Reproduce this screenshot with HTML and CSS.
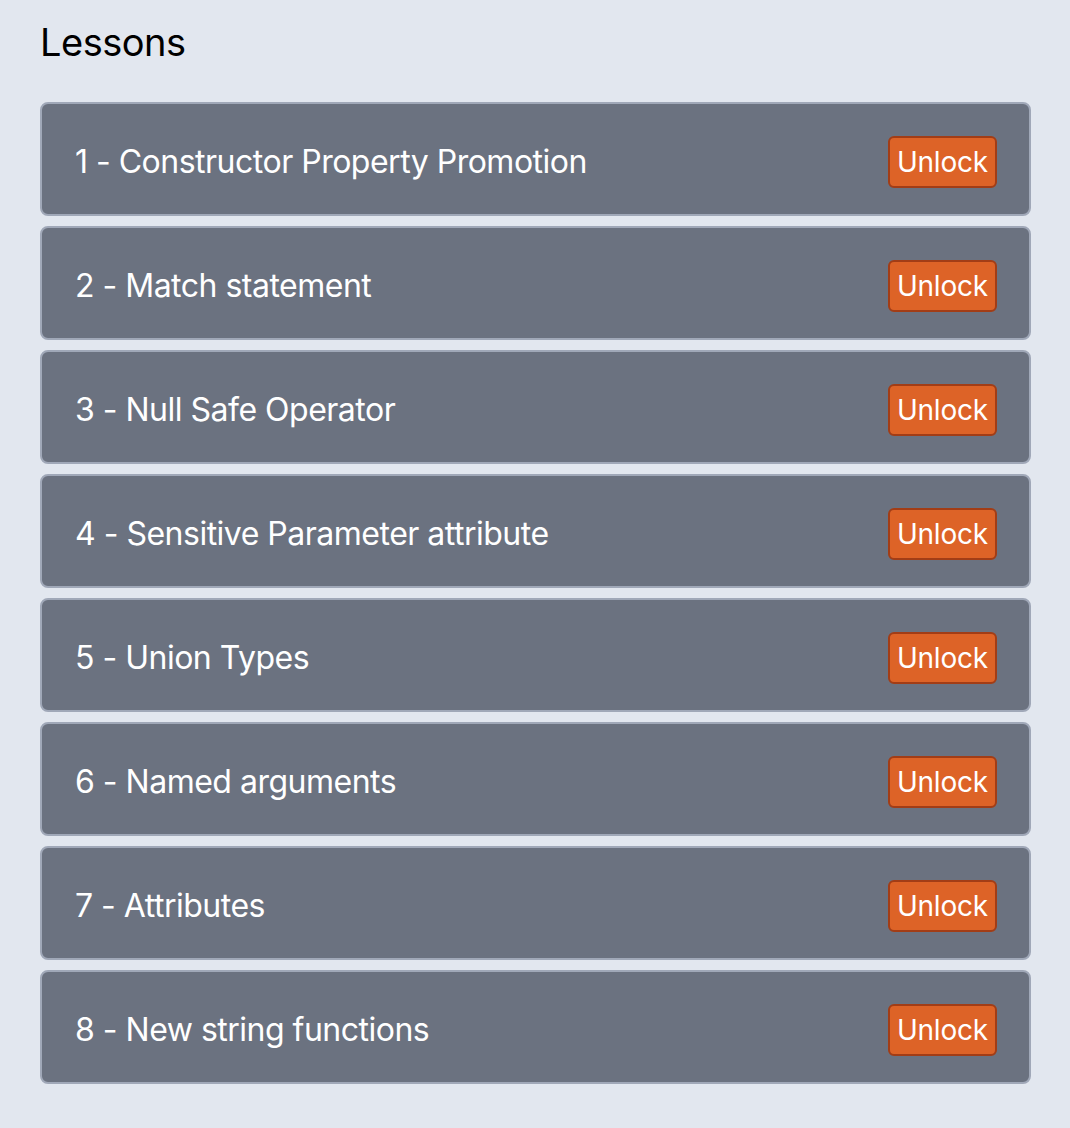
FILE: index.html
```html
<!DOCTYPE html>
<html lang="en">
<head>
	<meta charset="UTF-8">
	<title>Lessons</title>
	<link rel="stylesheet" href="styles.css">
</head>
<body>
<div class="wrap">
	<h1 class="title">Lessons</h1>
	<ul class="lessons">
		<li class="lesson">
			<span class="name">1 - Constructor Property Promotion</span>
			<button class="unlock">Unlock</button>
		</li>
		<li class="lesson">
			<span class="name">2 - Match statement</span>
			<button class="unlock">Unlock</button>
		</li>
		<li class="lesson">
			<span class="name">3 - Null Safe Operator</span>
			<button class="unlock">Unlock</button>
		</li>
		<li class="lesson">
			<span class="name">4 - Sensitive Parameter attribute</span>
			<button class="unlock">Unlock</button>
		</li>
		<li class="lesson">
			<span class="name">5 - Union Types</span>
			<button class="unlock">Unlock</button>
		</li>
		<li class="lesson">
			<span class="name">6 - Named arguments</span>
			<button class="unlock">Unlock</button>
		</li>
		<li class="lesson">
			<span class="name">7 - Attributes</span>
			<button class="unlock">Unlock</button>
		</li>
		<li class="lesson">
			<span class="name">8 - New string functions</span>
			<button class="unlock">Unlock</button>
		</li>
	</ul>
</div>
</body>
</html>
```

FILE: styles.css
```css
*{
	margin: 0;
	padding: 0;
	box-sizing: border-box;
}
html,body{
	background: #e2e7ef;
}
body{
	font-family: Inter, "Noto Sans", sans-serif;
	color: #000;
}
li{
	list-style: none;
}
.wrap{
	padding: 14px 39px 40px 40px;
}
.title{
	font-size: 38px;
	font-weight: normal;
	letter-spacing: -0.5px;
	line-height: 56px;
	margin-bottom: 32px;
}
.lessons{
	display: flex;
	flex-direction: column;
	gap: 10px;
}
.lesson{
	display: flex;
	align-items: center;
	justify-content: space-between;
	height: 114px;
	padding: 32px 32px 26px 33px;
	background: #6b7280;
	border: 2px solid #a0a8b8;
	border-radius: 8px;
}
.name{
	color: #fff;
	font-size: 32px;
	letter-spacing: -0.5px;
	line-height: 40px;
}
.unlock{
	height: 52px;
	padding: 0 7px;
	font-family: inherit;
	font-size: 28px;
	letter-spacing: -0.2px;
	color: #fff;
	background: #dd6327;
	border: 2px solid #a23d16;
	border-radius: 6px;
}
```
